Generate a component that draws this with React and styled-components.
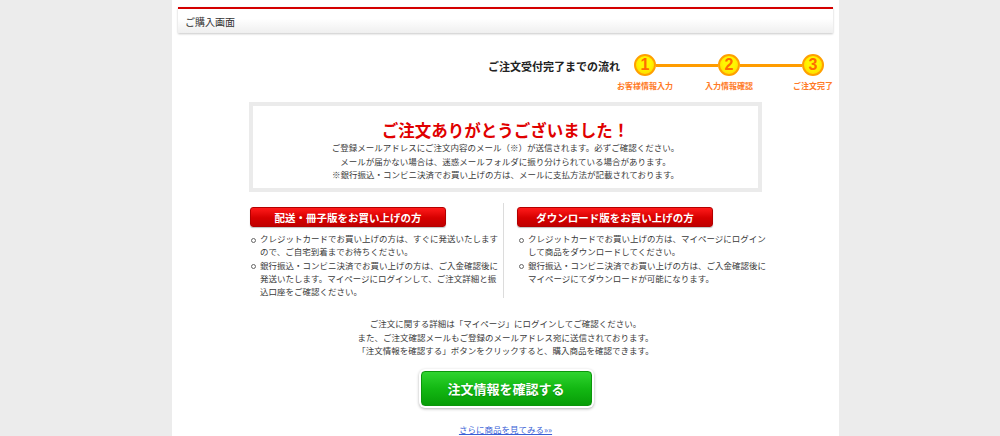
import React from "react";
import styled, { createGlobalStyle } from "styled-components";

const GlobalStyle = createGlobalStyle`
  body {
    margin: 0;
    background: #ececec;
    font-family: "Noto Sans CJK JP", "Noto Sans", sans-serif;
    color: #333;
  }
`;

const steps = ["お客様情報入力", "入力情報確認", "ご注文完了"];

const App = () => {
  return (
    <>
      <GlobalStyle />
      <PAGE>
        <HEADER>ご購入画面</HEADER>
        <FLOW>
          <FLOW_TITLE>ご注文受付完了までの流れ</FLOW_TITLE>
          <STEPS>
            {steps.map((label, i) => (
              <React.Fragment key={label}>
                {i > 0 && <CONNECTOR />}
                <STEP>
                  <CIRCLE>{i + 1}</CIRCLE>
                  <STEP_LABEL>{label}</STEP_LABEL>
                </STEP>
              </React.Fragment>
            ))}
          </STEPS>
        </FLOW>
        <THANKS>
          <THANKS_TITLE>ご注文ありがとうございました！</THANKS_TITLE>
          <p>
            ご登録メールアドレスにご注文内容のメール（※）が送信されます。必ずご確認ください。
            <br />
            メールが届かない場合は、迷惑メールフォルダに振り分けられている場合があります。
            <br />
            ※銀行振込・コンビニ決済でお買い上げの方は、メールに支払方法が記載されております。
          </p>
        </THANKS>
        <COLUMNS>
          <COLUMN>
            <RED_LABEL>配送・冊子版をお買い上げの方</RED_LABEL>
            <LIST $indent={1}>
              <li>
                <span>
                  クレジットカードでお買い上げの方は、すぐに発送いたします
                  <br />
                  ので、ご自宅到着までお待ちください。
                </span>
              </li>
              <li>
                <span>
                  銀行振込・コンビニ決済でお買い上げの方は、ご入金確認後に
                  <br />
                  発送いたします。マイページにログインして、ご注文詳細と振
                  <br />
                  込口座をご確認ください。
                </span>
              </li>
            </LIST>
          </COLUMN>
          <COLUMN $divided>
            <RED_LABEL>ダウンロード版をお買い上げの方</RED_LABEL>
            <LIST $indent={2}>
              <li>
                <span>
                  クレジットカードでお買い上げの方は、マイページにログイン
                  <br />
                  して商品をダウンロードしてください。
                </span>
              </li>
              <li>
                <span>
                  銀行振込・コンビニ決済でお買い上げの方は、ご入金確認後に
                  <br />
                  マイページにてダウンロードが可能になります。
                </span>
              </li>
            </LIST>
          </COLUMN>
        </COLUMNS>
        <NOTE>
          ご注文に関する詳細は「マイページ」にログインしてご確認ください。
          <br />
          また、ご注文確認メールもご登録のメールアドレス宛に送信されております。
          <br />
          「注文情報を確認する」ボタンをクリックすると、購入商品を確認できます。
        </NOTE>
        <GREEN_BUTTON type="button">注文情報を確認する</GREEN_BUTTON>
        <MORE_LINK href="#">さらに商品を見てみる»»</MORE_LINK>
      </PAGE>
    </>
  );
};

export default App;

const PAGE = styled.div`
  width: 667px;
  margin-left: 172px;
  min-height: 436px;
  box-sizing: border-box;
  padding-top: 7px;
  background: #fff;
  display: flex;
  flex-direction: column;
  align-items: center;
`;
const HEADER = styled.div`
  align-self: stretch;
  margin: 0 6px;
  height: 24px;
  border-top: 2px solid #d40000;
  background: linear-gradient(#ffffff 40%, #efefef);
  box-shadow: 0 1px 2px rgba(0, 0, 0, 0.22);
  padding-left: 7px;
  display: flex;
  align-items: center;
  font-size: 10px;
  color: #333;
`;
const FLOW = styled.div`
  align-self: stretch;
  display: flex;
  justify-content: flex-end;
  align-items: flex-start;
  margin-top: 21px;
  padding-right: 15px;
`;
const FLOW_TITLE = styled.div`
  font-size: 11px;
  font-weight: bold;
  line-height: 24px;
  color: #222;
  margin-right: 14px;
`;
const STEPS = styled.div`
  display: flex;
  align-items: flex-start;
`;
const STEP = styled.div`
  width: 22px;
  display: flex;
  flex-direction: column;
  align-items: center;
`;
const CONNECTOR = styled.div`
  width: 62px;
  height: 3px;
  margin-top: 9.5px;
  background: #ff9c00;
`;
const CIRCLE = styled.div`
  width: 22px;
  height: 22px;
  box-sizing: border-box;
  border-radius: 50%;
  border: 2px solid #ffa000;
  background: radial-gradient(circle at 50% 40%, #fff600 40%, #ffd000);
  display: flex;
  align-items: center;
  justify-content: center;
  font-family: "Liberation Sans", Arial, sans-serif;
  font-weight: bold;
  font-size: 16px;
  color: #ff6c00;
`;
const STEP_LABEL = styled.div`
  margin-top: 5px;
  font-size: 8px;
  line-height: 10px;
  font-weight: bold;
  color: #ff7a26;
  white-space: nowrap;
`;
const THANKS = styled.div`
  width: 513px;
  box-sizing: border-box;
  margin-top: 11px;
  border: 4px solid #ebebeb;
  padding: 13px 0 6.5px;
  text-align: center;
  p {
    margin: 0;
    font-size: 8.5px;
    line-height: 13.5px;
    color: #3a3a3a;
  }
`;
const THANKS_TITLE = styled.h2`
  margin: 0;
  font-size: 16.5px;
  line-height: 22px;
  font-weight: bold;
  color: #e00000;
`;
const COLUMNS = styled.div`
  width: 513px;
  margin-top: 11px;
  display: grid;
  grid-template-columns: 254px 1fr;
`;
const COLUMN = styled.div`
  padding: 4px 0 0 ${(props) => (props.$divided ? "13px" : "1px")};
  border-left: ${(props) => (props.$divided ? "1px solid #dcdcdc" : "none")};
`;
const RED_LABEL = styled.div`
  width: 196px;
  height: 20px;
  box-sizing: border-box;
  border-radius: 3px;
  border: 1px solid #b30000;
  background: linear-gradient(#ff1a1a, #d60000 55%, #c00000);
  box-shadow: 0 1px 1px rgba(0, 0, 0, 0.25);
  display: flex;
  align-items: center;
  justify-content: center;
  color: #fff;
  font-size: 10.5px;
  font-weight: bold;
`;
const LIST = styled.ul`
  list-style: none;
  margin: 5px 0 0;
  padding: 0 0 0 ${(props) => props.$indent}px;
  li {
    display: flex;
    font-size: 8.5px;
    line-height: 13.3px;
    color: #3a3a3a;
    white-space: nowrap;
  }
  li::before {
    content: "";
    flex: none;
    width: 3px;
    height: 3px;
    margin: 5.5px 4px 0 0;
    border: 1px solid #666;
    border-radius: 50%;
  }
`;
const NOTE = styled.p`
  margin: 19px 0 0;
  text-align: center;
  font-size: 8.5px;
  line-height: 13.5px;
  color: #3a3a3a;
`;
const GREEN_BUTTON = styled.button`
  margin-top: 13px;
  margin-left: 1px;
  width: 171px;
  height: 35px;
  border-radius: 4px;
  border: 1px solid #0b960b;
  background: linear-gradient(#2fd42f, #13b813 50%, #079d07);
  box-shadow: 0 0 0 2px #fff, 0 1px 3px 2px rgba(0, 0, 0, 0.3);
  color: #fff;
  font-family: "Noto Sans CJK JP", sans-serif;
  font-size: 13px;
  font-weight: bold;
  text-shadow: 0 1px 1px rgba(0, 0, 0, 0.2);
  cursor: pointer;
`;
const MORE_LINK = styled.a`
  margin-top: 17px;
  font-size: 8.5px;
  line-height: 12px;
  color: #3a5fd6;
  text-decoration: underline;
`;
